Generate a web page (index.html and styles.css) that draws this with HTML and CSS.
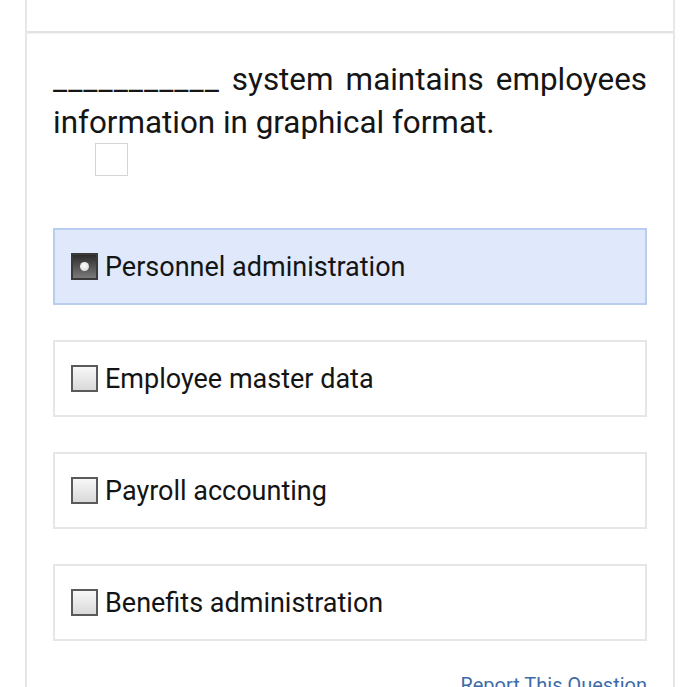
FILE: index.html
```html
<!DOCTYPE html>
<html>
<head>
<meta charset="utf-8">
<link rel="stylesheet" href="styles.css">
</head>
<body>
<div class="card">
  <div class="prev"></div>
  <div class="content">
    <p class="question"><span class="blank">___________</span> system maintains employees information in graphical format.</p>
    <div class="blank-box"></div>
    <div class="options">
      <div class="option selected"><span class="check checked"></span><span class="label">Personnel administration</span></div>
      <div class="option"><span class="check"></span><span class="label">Employee master data</span></div>
      <div class="option"><span class="check"></span><span class="label">Payroll accounting</span></div>
      <div class="option"><span class="check"></span><span class="label">Benefits administration</span></div>
    </div>
    <div class="report"><a class="report-link">Report This Question</a></div>
  </div>
</div>
</body>
</html>
```
FILE: styles.css
```css
html, body {
  margin: 0;
  padding: 0;
  background: #fff;
  font-family: Roboto, "Liberation Sans", sans-serif;
  color: #151515;
}
body {
  height: 687px;
  overflow: hidden;
}
.card {
  margin-left: 25px;
  width: 646px;
  border-left: 2px solid #e6e6e6;
  border-right: 2px solid #e6e6e6;
  min-height: 687px;
}
.prev {
  height: 31px;
  border-bottom: 2px solid #e2e2e2;
  box-shadow: 0 1px 1px #f3f3f3;
}
.content {
  padding: 25px 26px 0 26px;
}
.question {
  margin: 0;
  font-size: 31.4px;
  line-height: 43px;
  text-align: justify;
}
.blank {
  letter-spacing: 1px;
}
.blank-box {
  width: 31px;
  height: 31px;
  border: 1px solid #d4d4d4;
  margin-left: 42px;
  margin-top: -1px;
}
.options {
  margin-top: 52px;
  display: flex;
  flex-direction: column;
  gap: 35px;
}
.option {
  height: 73px;
  border: 2px solid #e6e6e6;
  display: flex;
  align-items: center;
  padding-left: 16px;
  gap: 7px;
}
.option.selected {
  background: #dfe9fb;
  border-color: #b9cdef;
}
.check {
  box-sizing: border-box;
  width: 27px;
  height: 27px;
  border: 2px solid #5a5a5a;
  background: linear-gradient(#f7f7f7, #d9d9d9);
  position: relative;
  flex: none;
}
.check.checked {
  border-color: #3a3a3a;
  background: linear-gradient(#2c2c2c, #7a7a7a);
}
.check.checked::after {
  content: "";
  position: absolute;
  left: 7px;
  top: 7px;
  width: 9px;
  height: 9px;
  border-radius: 50%;
  background: radial-gradient(circle at 45% 40%, #ffffff, #d0d0d0);
}
.label {
  font-size: 27px;
  line-height: 30px;
  color: #141414;
}
.report {
  display: flex;
  justify-content: flex-end;
  margin-top: 30px;
}
.report-link {
  font-size: 20px;
  line-height: 28px;
  color: #3d6ba8;
}
```
